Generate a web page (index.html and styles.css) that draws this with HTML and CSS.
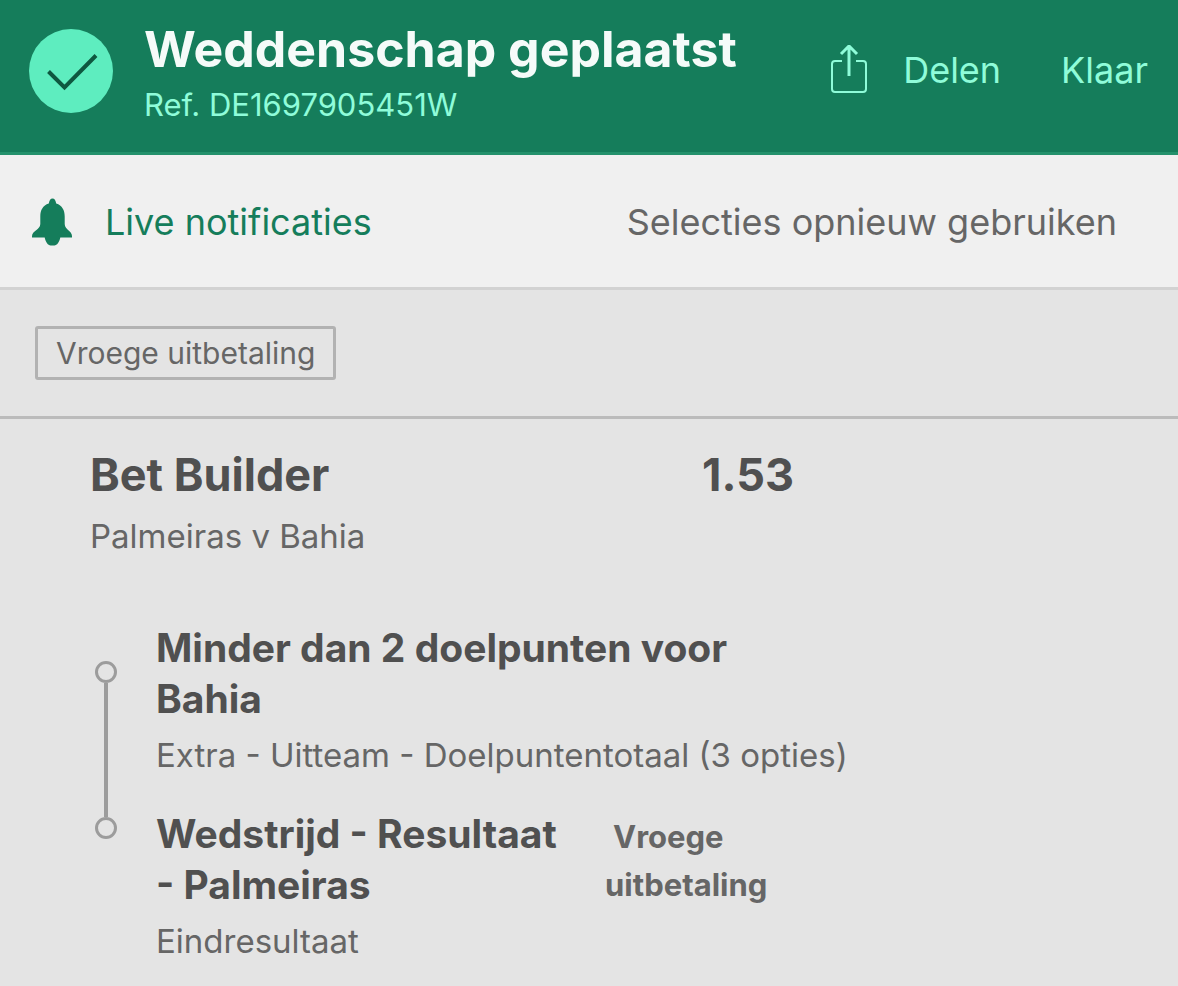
FILE: index.html
```html
<!DOCTYPE html>
<html lang="nl">
<head>
<meta charset="utf-8">
<meta name="viewport" content="width=device-width, initial-scale=1">
<title>Weddenschap geplaatst</title>
<link rel="stylesheet" href="styles.css">
</head>
<body>
<header class="receipt-header">
  <svg class="check-icon" viewBox="0 0 84 84" aria-hidden="true">
    <circle cx="42" cy="42" r="42" fill="#5eedbf"/>
    <path d="M19.500 42.500 35.500 58.500 67 26.500" fill="none" stroke="#0e5840" stroke-width="4"/>
  </svg>
  <div class="receipt-info">
    <h1 class="receipt-title">Weddenschap geplaatst</h1>
    <p class="receipt-ref">Ref. DE1697905451W</p>
  </div>
  <div class="header-actions">
    <button class="header-button" type="button">
      <svg class="share-icon" viewBox="0 0 38 50" fill="none" stroke="currentColor" stroke-width="2" aria-hidden="true">
        <path d="M12 16H5a3 3 0 0 0-3 3v25a3 3 0 0 0 3 3h28a3 3 0 0 0 3-3V19a3 3 0 0 0-3-3h-7"/>
        <path d="M19 31V2M11 9l8-8 8 8" stroke-width="3"/>
      </svg>
      Delen
    </button>
    <button class="header-button" type="button">Klaar</button>
  </div>
</header>
<nav class="toolbar">
  <button class="toolbar-button toolbar-live" type="button">
    <svg class="bell-icon" viewBox="0 0 42 48" fill="currentColor" aria-hidden="true">
      <path d="M21 0c2 0 3.300 2 3.800 5C31 7 33.500 12 33.500 18v8c0 6 7.500 7 7.500 12.500V40H29c-1 5-3.500 8-6 8h-4c-2.500 0-5-3-6-8H0v-1.500C0 33 8.500 32 8.500 26v-8c0-6 2.500-11 8.700-13C17.700 2 19 0 21 0z"/>
    </svg>
    Live notificaties
  </button>
  <button class="toolbar-button" type="button">Selecties opnieuw gebruiken</button>
</nav>
<div class="tags"><span class="tag">Vroege uitbetaling</span></div>
<main class="bet">
  <div class="bet-head">
    <h2 class="bet-title">Bet Builder</h2>
    <span class="bet-odds">1.53</span>
  </div>
  <p class="detail">Palmeiras v Bahia</p>
  <div class="builder">
    <div class="rail" aria-hidden="true">
      <span class="rail-dot"></span>
      <span class="rail-line"></span>
      <span class="rail-dot"></span>
    </div>
    <ul class="selections">
      <li class="selection">
        <div class="selection-head">
          <h3 class="selection-name">Minder dan 2 doelpunten voor Bahia</h3>
        </div>
        <p class="detail">Extra - Uitteam - Doelpuntentotaal (3 opties)</p>
      </li>
      <li class="selection">
        <div class="selection-head">
          <h3 class="selection-name selection-name-tagged">Wedstrijd - Resultaat - Palmeiras</h3>
          <div class="early"><span class="early-label">Vroege uitbetaling</span></div>
        </div>
        <p class="detail">Eindresultaat</p>
      </li>
    </ul>
  </div>
</main>
</body>
</html>
```
FILE: styles.css
```css
* {
  box-sizing: border-box;
}

body {
  margin: 0;
  background: #e4e4e4;
  color: #666;
  font-family: Inter, "Liberation Sans", sans-serif;
}

h1, h2, h3, p, ul {
  margin: 0;
  padding: 0;
}

button {
  padding: 0;
  border: 0;
  background: none;
  color: inherit;
  font: inherit;
  cursor: pointer;
}

.receipt-header {
  display: flex;
  align-items: flex-start;
  padding: 19px 30px 25px 29px;
  border-bottom: 3px solid #24916c;
  background: #157d5b;
  color: #8ffcd9;
}

.check-icon {
  flex: none;
  width: 84px;
  height: 84px;
  margin: 10px 31px 0 0;
}

.receipt-title {
  color: #f5fbf9;
  font-size: 50px;
  font-weight: 700;
  line-height: 60px;
}

.receipt-ref {
  margin-top: 4px;
  font-size: 31px;
  line-height: 44px;
}

.header-actions {
  display: flex;
  gap: 60px;
  margin: 26px 0 0 auto;
}

.header-button {
  display: flex;
  align-items: center;
  gap: 35px;
  font-size: 36px;
  line-height: 50px;
}

.share-icon {
  width: 38px;
  height: 50px;
}

.toolbar {
  display: flex;
  align-items: center;
  justify-content: space-between;
  padding: 43px 61px 41px 32px;
  border-bottom: 3px solid #d2d2d2;
  background: #f0f0f0;
}

.toolbar-button {
  display: flex;
  align-items: center;
  gap: 32px;
  font-size: 36px;
  line-height: 48px;
}

.toolbar-live {
  color: #157d5b;
}

.bell-icon {
  width: 41px;
  height: 48px;
}

.tags {
  display: flex;
  padding: 36px 35px;
  border-bottom: 3px solid #bbb;
}

.tag {
  padding: 3px 18px;
  border: 3px solid #b2b2b2;
  border-radius: 3px;
  font-size: 30px;
  line-height: 42px;
}

.bet {
  padding: 28px 90px 20px;
}

.bet-head {
  display: flex;
  justify-content: space-between;
  max-width: 704px;
  margin-bottom: 9px;
  color: #505050;
  font-size: 45px;
  font-weight: 700;
  line-height: 56px;
}

.bet-title {
  font-size: inherit;
}

.detail {
  font-size: 33px;
  line-height: 48px;
}

.builder {
  display: flex;
  gap: 39px;
  padding: 62px 0 0 5px;
}

.rail {
  display: flex;
  flex: none;
  flex-direction: column;
  align-items: center;
  width: 22px;
  padding: 39px 0 126px;
}

.rail-dot {
  flex: none;
  width: 22px;
  height: 22px;
  border: 3px solid #9c9c9c;
  border-radius: 50%;
}

.rail-line {
  flex: 1;
  width: 4px;
  background: #9c9c9c;
}

.selections {
  display: grid;
  gap: 29px;
  list-style: none;
}

.selection-head {
  display: flex;
  align-items: baseline;
  gap: 29px;
  max-width: 640px;
  margin-bottom: 7px;
}

.selection-name {
  color: #505050;
  font-size: 39px;
  font-weight: 700;
  line-height: 51px;
}

.selection-name-tagged {
  flex: none;
  width: 420px;
}

.early {
  font-size: 31px;
  font-weight: 700;
  line-height: 48px;
}

.early-label {
  padding: 0 8px;
}
```
